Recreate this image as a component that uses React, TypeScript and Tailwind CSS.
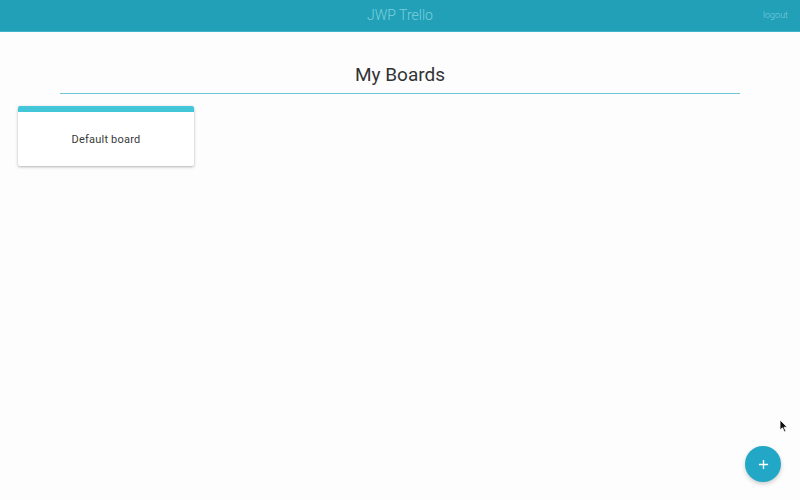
const App = () => {
  return (
    <div className="relative min-h-[500px] w-full bg-[#fefdfe] font-['Roboto',sans-serif] overflow-hidden">
      <header className="relative flex h-[32px] items-center justify-center border-b border-[#3fb3c8] bg-[#21a0b8]">
        <span className="text-[14px] font-light text-[#7dcfdc]">JWP Trello</span>
        <span className="absolute right-[12px] top-[9px] text-[9px] font-light text-[#7dcfdc]">logout</span>
      </header>

      <main className="flex flex-col">
        <div className="mx-auto mt-[31px] w-[680px] text-center">
          <h1 className="text-[19px] leading-[24px] text-[#333333]">My Boards</h1>
          <div className="mt-[6px] h-px bg-[#6fc4d2]" />
        </div>

        <div className="mt-[12px] flex px-[18px]">
          <div className="flex h-[60px] w-[176px] flex-col overflow-hidden rounded-[2px] bg-white shadow-[0_1px_3px_rgba(0,0,0,0.3)]">
            <div className="h-[6px] bg-[#44c6d9]" />
            <div className="flex flex-1 items-center justify-center pt-[2px] text-[11px] tracking-[0.2px] text-[#3a3a3a]">
              Default board
            </div>
          </div>
        </div>
      </main>

      <svg
        className="absolute left-[779px] top-[419px]"
        width="10"
        height="14"
        viewBox="0 0 10 14"
      >
        <path d="M1 1 L1 11 L3.5 8.8 L5.5 13 L7 12.3 L5 8.2 L8.3 8.2 Z" fill="#111" stroke="#fff" strokeWidth="0.8" />
      </svg>

      <button className="absolute left-[745px] top-[446px] flex h-[36px] w-[36px] items-center justify-center rounded-full bg-[#22a7c6] shadow-[0_2px_4px_rgba(0,0,0,0.2)]">
        <svg width="11" height="11" viewBox="0 0 12 12">
          <path d="M6 1 V11 M1 6 H11" stroke="#fff" strokeWidth="1.5" />
        </svg>
      </button>
    </div>
  );
};

export default App;
